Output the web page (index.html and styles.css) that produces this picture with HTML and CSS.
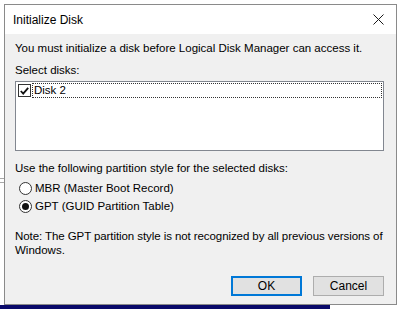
FILE: index.html
```html
<!DOCTYPE html>
<html lang="en">
<head>
  <meta charset="UTF-8">
  <title>Initialize Disk</title>
  <link rel="stylesheet" href="styles.css">
</head>
<body>
  <div class="desk-line desk-line1"></div>
  <div class="desk-line desk-line2"></div>
  <div class="desk-bar"></div>
  <div class="dialog">
    <div class="title-bar">
      <span class="title">Initialize Disk</span>
      <span class="close">
        <svg width="11" height="11" viewBox="0 0 11 11"><path d="M0.5 0.5 L10.5 10.5 M10.5 0.5 L0.5 10.5" stroke="#1a1a1a" stroke-width="1" fill="none"/></svg>
      </span>
    </div>
    <div class="body">
      <p class="intro">You must initialize a disk before Logical Disk Manager can access it.</p>
      <p class="label">Select disks:</p>
      <div class="list">
        <div class="list-item">
          <span class="check">
            <svg width="9" height="8" viewBox="0 0 9 8"><path d="M0.8 4 L3.2 6.6 L8.2 0.8" stroke="#111" stroke-width="1.8" fill="none"/></svg>
          </span>
          <span class="item-text">Disk 2</span>
        </div>
      </div>
      <p class="label style-label">Use the following partition style for the selected disks:</p>
      <div class="radio-row"><span class="radio"></span>MBR (Master Boot Record)</div>
      <div class="radio-row"><span class="radio on"></span>GPT (GUID Partition Table)</div>
      <p class="note"><span class="nowrap">Note: The GPT partition style is not recognized by all previous versions of</span><br>Windows.</p>
      <div class="buttons">
        <button class="btn default">OK</button>
        <button class="btn">Cancel</button>
      </div>
    </div>
  </div>
</body>
</html>
```

FILE: styles.css
```css
html, body {
  margin: 0;
  padding: 0;
  width: 400px;
  height: 309px;
  overflow: hidden;
  background: #ffffff;
  font-family: 'Liberation Sans', Arial, sans-serif;
  font-size: 11.5px;
  color: #000;
}
body {
  position: relative;
  padding: 4px 3px 0 4px;
  box-sizing: border-box;
}
.desk-line {
  position: absolute;
  left: 0;
  width: 4px;
  height: 1px;
  background: #a8a8a8;
}
.desk-line1 { top: 178px; }
.desk-line2 { top: 182px; }
.desk-bar {
  position: absolute;
  left: 0;
  top: 305px;
  width: 330px;
  height: 4px;
  background: #0a0a6a;
}
.dialog {
  position: relative;
  z-index: 1;
  border: 1px solid #8a8a8a;
  background: #f0f0f0;
  height: 301px;
  box-sizing: border-box;
  display: flex;
  flex-direction: column;
}
.title-bar {
  height: 29px;
  background: #fff;
  display: flex;
  align-items: center;
  justify-content: space-between;
  padding: 0 8px 0 8px;
}
.title {
  font-size: 12px;
  color: #000;
}
.close {
  display: flex;
  width: 18px;
  justify-content: center;
  margin-right: 1px;
}
.body {
  padding: 6px 12px 0 10px;
  flex: 1;
  display: flex;
  flex-direction: column;
}
p { margin: 0; }
.intro { line-height: 16px; }
.label {
  margin-top: 6px;
  line-height: 16px;
}
.list {
  margin-top: 3px;
  height: 70px;
  background: #fff;
  border: 1px solid #828790;
  padding: 1px;
  box-sizing: border-box;
}
.list-item {
  display: flex;
  align-items: center;
  height: 15px;
}
.check {
  width: 11px;
  height: 11px;
  border: 1px solid #333;
  background: #fff;
  margin-left: 1px;
  display: flex;
  align-items: center;
  justify-content: center;
}
.item-text {
  flex: 1;
  margin-left: 1px;
  height: 15px;
  line-height: 13px;
  padding-left: 1px;
  border: 1px dotted #333;
  box-sizing: border-box;
}
.style-label { margin-top: 9px; }
.radio-row {
  display: flex;
  align-items: center;
  height: 18px;
  line-height: 18px;
}
.style-label + .radio-row { margin-top: 3px; }
.radio {
  width: 11px;
  height: 11px;
  border: 1px solid #333;
  border-radius: 50%;
  background: #fff;
  margin-left: 4px;
  margin-right: 3px;
  position: relative;
}
.radio.on::after {
  content: "";
  position: absolute;
  left: 2px;
  top: 2px;
  width: 7px;
  height: 7px;
  border-radius: 50%;
  background: #111;
}
.note {
  margin-top: 14px;
  line-height: 14px;
}
.nowrap {
  white-space: nowrap;
  letter-spacing: -0.08px;
}
.buttons {
  margin-top: auto;
  margin-bottom: 8px;
  display: flex;
  justify-content: flex-end;
  gap: 11px;
}
.btn {
  width: 71px;
  height: 20px;
  font-family: inherit;
  font-size: 12px;
  background: #e1e1e1;
  border: 1px solid #adadad;
  padding: 0;
  color: #000;
}
.btn.default {
  border: 2px solid #0078d7;
}
```
